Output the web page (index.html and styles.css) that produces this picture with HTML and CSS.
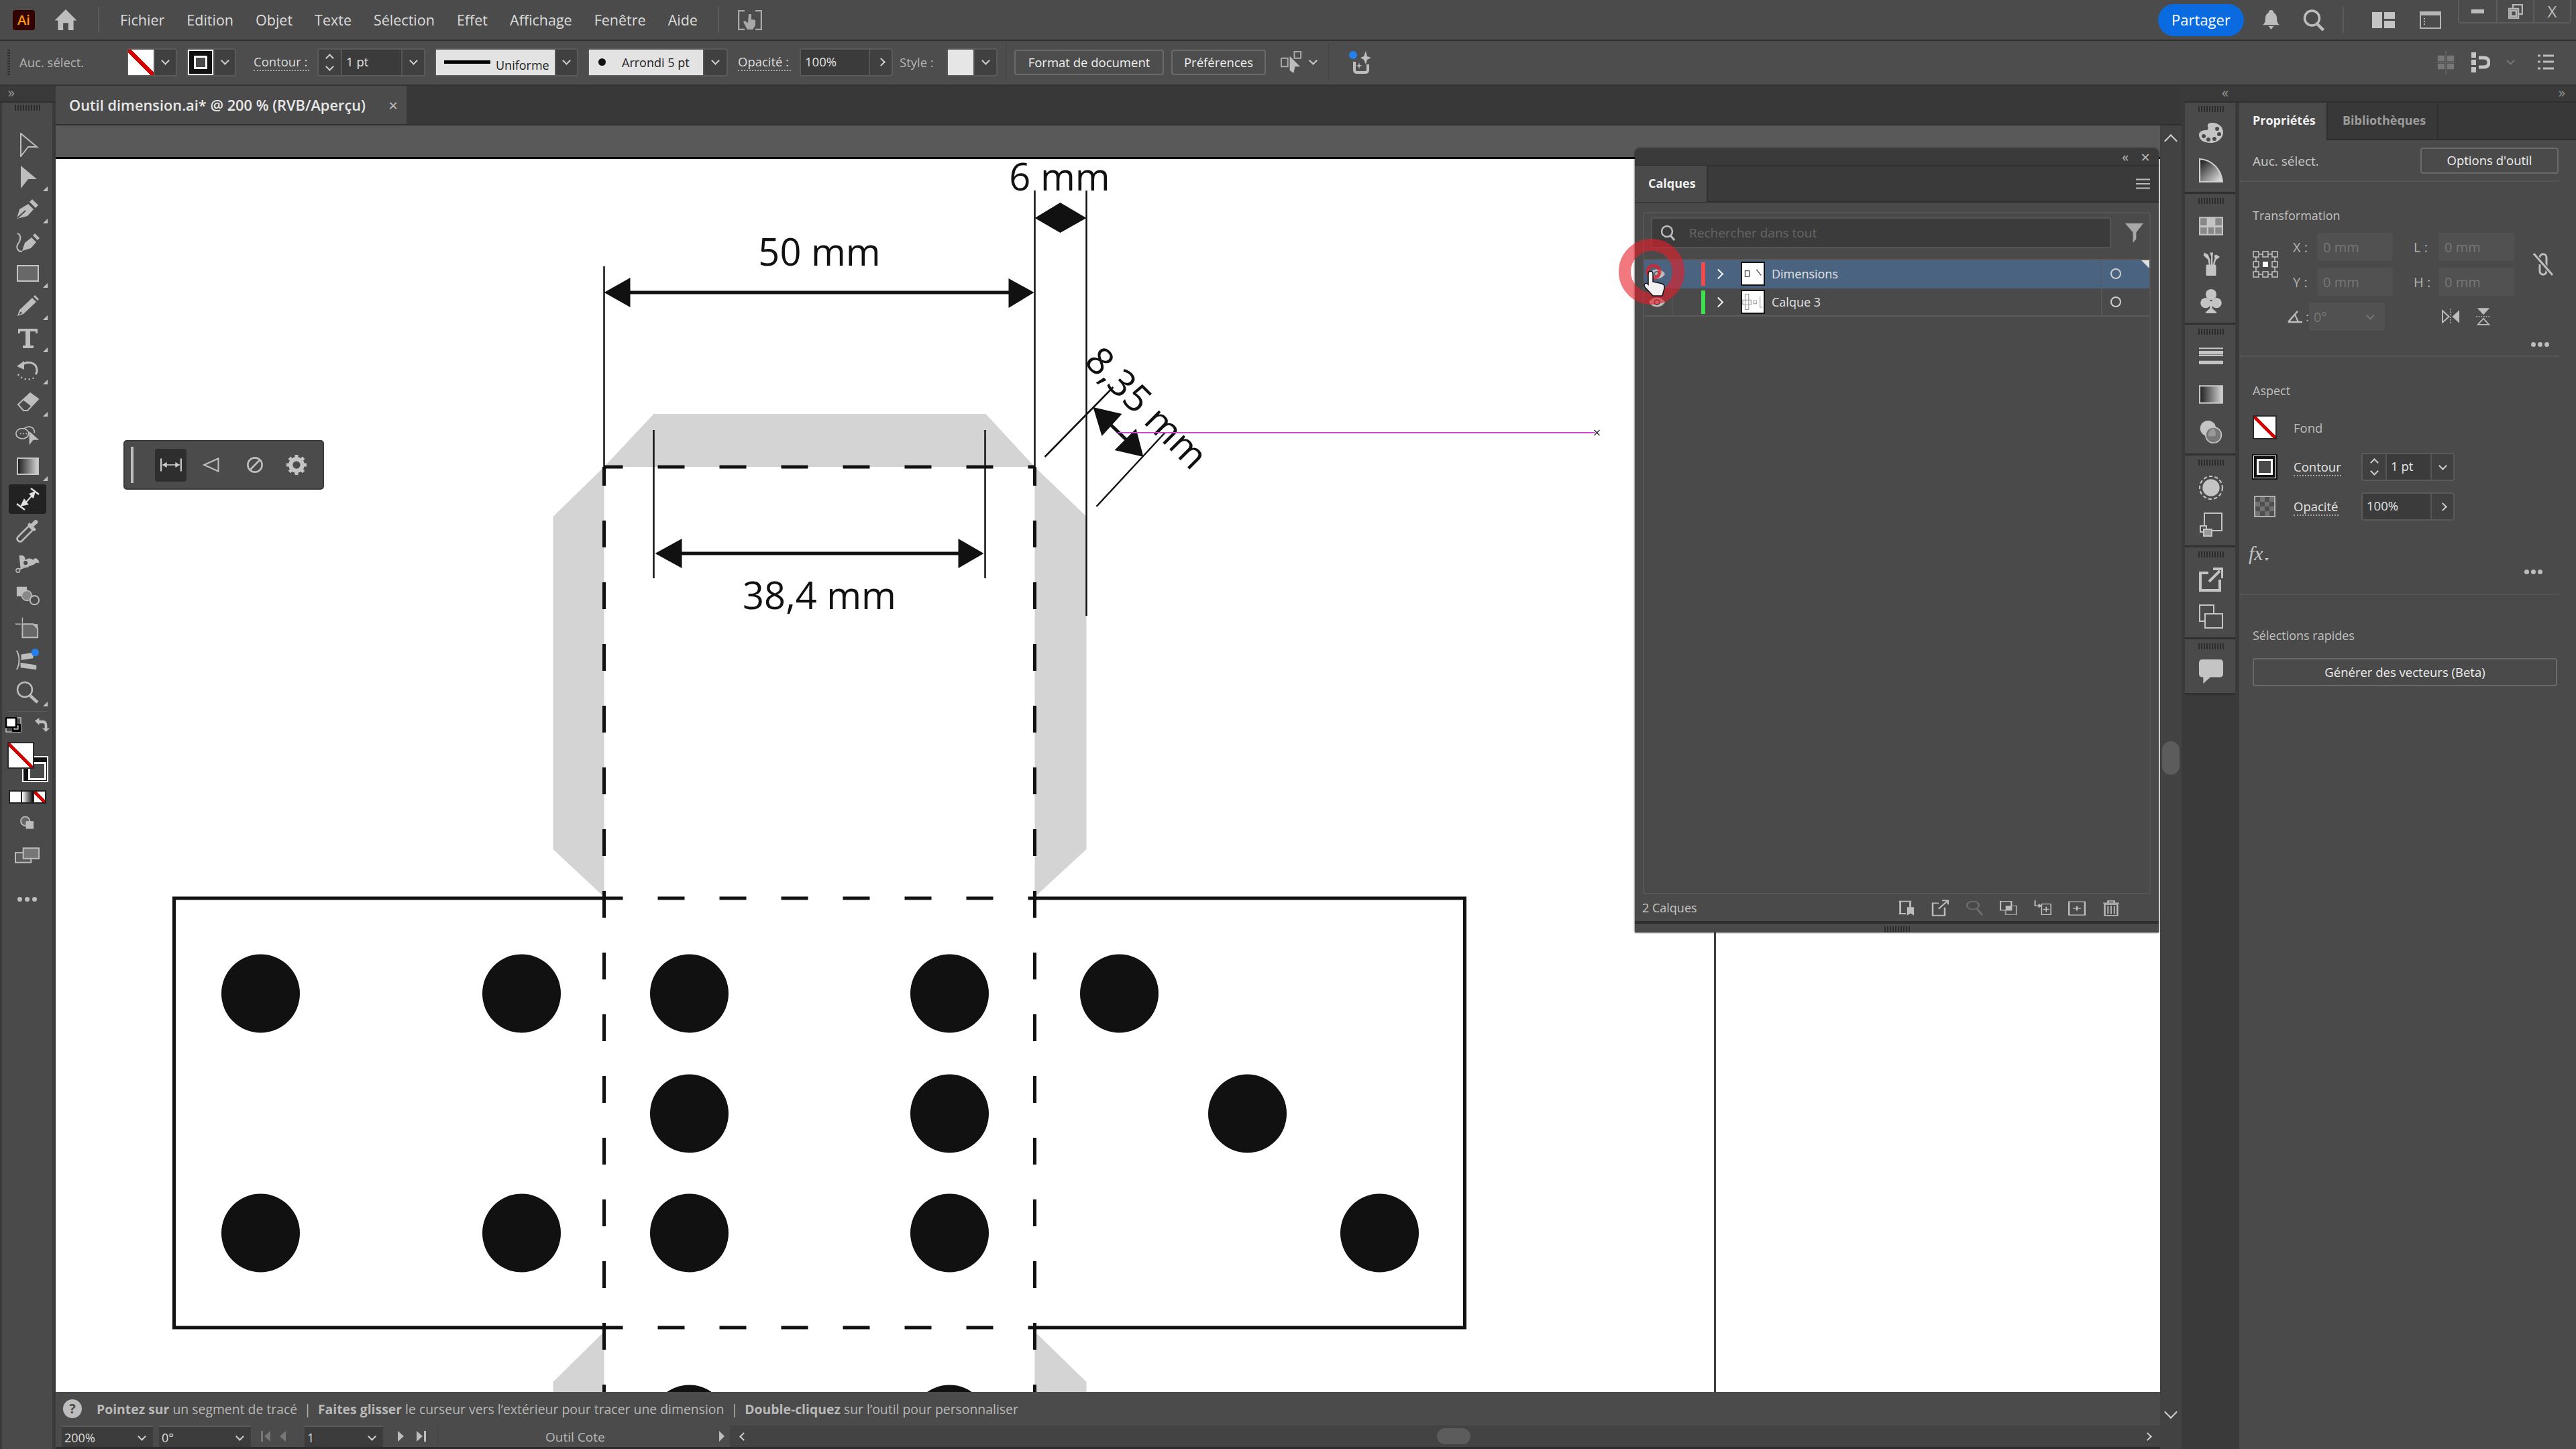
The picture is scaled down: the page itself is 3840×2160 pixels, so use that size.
FILE: index.html
```html
<!DOCTYPE html>
<html lang="fr">
<head>
    <meta charset="utf-8">
    <title>Outil dimension.ai - Illustrator</title>
    <link rel="stylesheet" href="styles.css">
</head>
<body>

    <!-- Menu bar -->
    <header class="menubar">
        <div class="ai-logo">Ai</div>
        <svg class="home-icon" viewBox="0 0 36 32"><path d="M18 0 L35 17 L30 17 L30 32 L22 32 L22 21 L14 21 L14 32 L6 32 L6 17 L1 17 Z" fill="#bdbdbd"/></svg>
        <span class="menu-sep first"></span>
        <nav class="menu-items">
            <span>Fichier</span><span>Edition</span><span>Objet</span><span>Texte</span><span>Sélection</span><span>Effet</span><span>Affichage</span><span>Fenêtre</span><span>Aide</span>
        </nav>
        <span class="menu-sep"></span>
        <svg class="arrange-icon" viewBox="0 0 36 30"><path d="M10 1 H1 V29 H10 M26 1 H35 V29 H26" fill="none" stroke="#a8a8a8" stroke-width="2.5"/><path d="M16 6 H20 V14 L26 15 V23 L22 29 H14 L8 18 L10 16 L15 19 Z" fill="#a8a8a8"/></svg>
        <div class="share-btn">Partager</div>
        <svg class="bell-icon" viewBox="0 0 26 30"><path d="M13 0 C16 0 17 2 17 4 C21 6 22 10 22 14 C22 18 23 21 26 23 H0 C3 21 4 18 4 14 C4 10 5 6 9 4 C9 2 10 0 13 0 Z M9 25 H17 L13 30 Z" fill="#bdbdbd"/></svg>
        <svg class="search-icon" viewBox="0 0 34 32"><circle cx="14" cy="13" r="11" fill="none" stroke="#bdbdbd" stroke-width="3.5"/><path d="M21 21 L31 31" stroke="#bdbdbd" stroke-width="4.5"/></svg>
        <span class="menu-sep right"></span>
        <svg class="layout-icon" viewBox="0 0 34 24"><path d="M0 0 H15 V24 H0 Z M18 0 H34 V10 H18 Z M18 13 H34 V24 H18 Z" fill="#c4c4c4"/></svg>
        <svg class="window-icon" viewBox="0 0 32 26"><rect x="1" y="1" width="30" height="24" fill="none" stroke="#b5b5b5" stroke-width="2"/><rect x="1" y="1" width="30" height="5" fill="#b5b5b5"/><path d="M7 10 V21" stroke="#b5b5b5" stroke-width="2" stroke-dasharray="2 2"/></svg>
        <div class="win-controls">
            <div class="win-btn"><span class="win-min"></span></div>
            <div class="win-btn"><svg class="win-restore" viewBox="0 0 22 22"><path d="M7 6 V1 H21 V15 H16 M1 7 H15 V21 H1 Z M4 10 H12 V18 H4 Z" fill="none" stroke="#b5b5b5" stroke-width="2.5"/></svg></div>
            <div class="win-btn close">X</div>
        </div>
    </header>

    <!-- Control bar -->
    <section class="controlbar">
        <span class="ctl-grip"></span>
        <span class="ctl-text auc">Auc. sélect.</span>
        <div class="combo c-fill"><span class="sw sw-none"></span><span class="chev-box"><i class="chev"></i></span></div>
        <div class="combo c-stroke"><span class="sw sw-stroke"></span><span class="chev-box"><i class="chev"></i></span></div>
        <span class="ctl-text dotted l-contour">Contour :</span>
        <div class="combo c-spin"><span class="spin"><i class="chev up"></i><i class="chev"></i></span><span class="val">1 pt</span><span class="chev-box"><i class="chev"></i></span></div>
        <div class="combo c-line"><span class="light-field lf-line"><b class="stroke-sample"></b><em>Uniforme</em></span><span class="chev-box"><i class="chev"></i></span></div>
        <div class="combo c-brush"><span class="light-field lf-brush"><b class="brush-dot"></b><em>Arrondi 5 pt</em></span><span class="chev-box"><i class="chev"></i></span></div>
        <span class="ctl-text dotted l-opacity">Opacité :</span>
        <div class="combo c-opacity"><span class="val wide">100%</span><span class="chev-box"><i class="chev side"></i></span></div>
        <span class="ctl-text l-style">Style :</span>
        <div class="combo c-style"><span class="sw sw-plain"></span><span class="chev-box"><i class="chev"></i></span></div>
        <span class="ctl-sep s1"></span>
        <div class="ctl-btn b-format">Format de document</div>
        <div class="ctl-btn b-prefs">Préférences</div>
        <svg class="align-icon" viewBox="0 0 38 34"><path d="M22 1 H32 V11 H22 Z M2 11 H12 V24 H2 Z" fill="none" stroke="#aaa" stroke-width="2"/><path d="M15 8 L31 24 L23 24 L21 34 L15 30 Z" fill="#bdbdbd"/></svg>
        <i class="chev free"></i>
        <span class="ctl-sep s2"></span>
        <svg class="recolor-icon" viewBox="0 0 36 36"><path d="M8 17 V29 Q8 33 12 33 H24 Q28 33 28 29 V21" fill="none" stroke="#bdbdbd" stroke-width="4"/><path d="M25 1 L27 9 L33 11 L27 14 L25 21 L22 14 L17 11 L22 9 Z M15 18 L16 22 L20 23 L16 24 L15 28 L14 24 L10 23 L14 22 Z" fill="#bdbdbd"/><circle cx="6" cy="7" r="6" fill="#2680eb"/></svg>
        <div class="ctl-right">
            <svg class="grid-snap" viewBox="0 0 30 38"><path d="M2 8 H13 V17 H2 Z M17 8 H28 V17 H17 Z M2 21 H13 V30 H2 Z M17 21 H28 V30 H17 Z" fill="#777"/><path d="M15 0 V38 M0 19 H30" stroke="#666" stroke-width="1.5"/></svg>
            <svg class="magnet" viewBox="0 0 28 30"><path d="M0 0 H7 V8 H0 Z M0 11 H7 V19 H0 Z M0 22 H7 V30 H0 Z" fill="#c4c4c4"/><path d="M11 8 H18 Q26 8 26 15 Q26 22 18 22 H11" fill="none" stroke="#c4c4c4" stroke-width="5"/></svg>
            <i class="chev free dim"></i>
            <svg class="list-icon" viewBox="0 0 24 24"><path d="M0 2 H4 M8 2 H24 M0 11 H4 M8 11 H24 M0 21 H4 M8 21 H24" stroke="#bdbdbd" stroke-width="3"/></svg>
        </div>
    </section>

    <main class="workspace">

        <!-- Left toolbar -->
        <aside class="left-col">
            <div class="collapse-row"><span>»</span></div>
            <div class="toolbar">
                <div class="tool-grip"><span class="grip"></span></div>
                <div class="tool"><svg viewBox="0 0 36 36"><path d="M8 1 L32 21 L19 21 L8 35 Z" fill="none" stroke="#bdbdbd" stroke-width="2"/></svg></div>
                <div class="tool more"><svg viewBox="0 0 36 36"><path d="M8 1 L32 21 L19 21 L8 35 Z" fill="#bdbdbd"/></svg></div>
                <div class="tool more"><svg viewBox="0 0 36 36"><path d="M2 32 L6 18 L19 10 L27 18 L18 28 Z" fill="#bdbdbd"/><path d="M21 7 L25 3 L34 12 L30 16 Z" fill="#bdbdbd"/><path d="M3 31 L15 20" stroke="#4a4a4a" stroke-width="2"/></svg></div>
                <div class="tool"><svg viewBox="0 0 36 36"><path d="M10 32 L14 20 L24 12 L31 19 L23 28 Z" fill="#bdbdbd"/><path d="M26 9 L29 6 L36 13 L33 16 Z" fill="#bdbdbd"/><path d="M3 6 C9 8 8 16 4 21 C0 28 4 33 10 33" fill="none" stroke="#bdbdbd" stroke-width="2"/></svg></div>
                <div class="tool more"><svg viewBox="0 0 36 36"><rect x="3" y="6" width="31" height="23" fill="#686868" stroke="#c4c4c4" stroke-width="2"/></svg></div>
                <div class="tool more"><svg viewBox="0 0 36 36"><path d="M3 33 L6 24 L25 6 L31 12 L12 30 Z" fill="#bdbdbd"/><path d="M27 4 L29 2 L35 8 L33 10 Z" fill="#bdbdbd"/><path d="M5 31 L8 26 L10 29 Z" fill="#4a4a4a"/></svg></div>
                <div class="tool more"><svg viewBox="0 0 36 36"><path d="M4 4 H33 V11 H30 V8 H22 V29 H27 V33 H11 V29 H15 V8 H7 V11 H4 Z" fill="#bdbdbd"/></svg></div>
                <div class="tool more"><svg viewBox="0 0 36 36"><path d="M9 11 C16 4 32 4 32 19 C32 21 31 23 30 24" fill="none" stroke="#bdbdbd" stroke-width="3"/><path d="M2 12 L13 4 L13 17 Z" fill="#bdbdbd"/><path d="M4 24 C9 32 22 34 29 28" fill="none" stroke="#bdbdbd" stroke-width="2.5" stroke-dasharray="2 4"/></svg></div>
                <div class="tool more"><svg viewBox="0 0 36 36"><path d="M4 21 L22 4 L34 13 L18 30 L12 30 Z" fill="none" stroke="#bdbdbd" stroke-width="2"/><path d="M11 14 L22 4 L34 13 L24 24 Z" fill="#bdbdbd"/></svg></div>
                <div class="tool"><svg viewBox="0 0 42 36"><ellipse cx="12" cy="16" rx="11" ry="9" fill="none" stroke="#bdbdbd" stroke-width="2"/><path d="M14 8 C22 1 34 4 33 15" fill="none" stroke="#bdbdbd" stroke-width="2"/><path d="M8 16 H24" stroke="#bdbdbd" stroke-width="2" stroke-dasharray="2 3"/><path d="M24 12 L41 27 L31 27 L24 36 Z" fill="#bdbdbd"/></svg></div>
                <div class="tool more"><svg viewBox="0 0 36 36"><rect x="3" y="5" width="31" height="24" fill="url(#tool-grad)" stroke="#c4c4c4" stroke-width="2"/></svg></div>
                <div class="tool active"><svg viewBox="0 0 36 36"><path d="M2 25 L14 34 M23 2 L35 11" stroke="#e0e0e0" stroke-width="2.5"/><path d="M7 29 L13 17 L16 21 L23 13 L20 10 L30 6 L27 17 L24 15 L17 23 L20 26 Z" fill="#e0e0e0"/></svg></div>
                <div class="tool"><svg viewBox="0 0 36 36"><path d="M4 32 C2 30 2 28 4 26 L20 10 L26 16 L10 32 C8 34 6 34 4 32 Z" fill="none" stroke="#bdbdbd" stroke-width="2.5"/><path d="M18 8 L28 18 L31 15 L27 11 L33 6 C35 3 31 -1 28 2 L23 7 L21 5 Z" fill="#bdbdbd"/></svg></div>
                <div class="tool"><svg viewBox="0 0 38 36"><path d="M6 6 C14 4 16 9 14 15 C18 9 26 10 28 13 C30 8 36 10 37 17 C33 14 30 20 22 21 C16 22 12 22 8 26" fill="#bdbdbd" stroke="#bdbdbd"/><path d="M4 28 L30 18 M10 8 L20 24" stroke="#bdbdbd" stroke-width="2"/><circle cx="4" cy="29" r="3" fill="#4a4a4a" stroke="#bdbdbd" stroke-width="1.5"/><circle cx="16" cy="17" r="4" fill="#4a4a4a" stroke="#bdbdbd" stroke-width="1.5"/></svg></div>
                <div class="tool"><svg viewBox="0 0 38 36"><rect x="2" y="4" width="16" height="15" fill="#bdbdbd"/><circle cx="18" cy="18" r="8" fill="#888" stroke="#bdbdbd" stroke-width="1.5"/><circle cx="30" cy="25" r="7" fill="#4a4a4a" stroke="#bdbdbd" stroke-width="2"/></svg></div>
                <div class="tool"><svg viewBox="0 0 38 36"><path d="M0 12 H9 M11 2 V10" stroke="#bdbdbd" stroke-width="1.5"/><path d="M11 12 H28 L35 19 V33 H11 Z" fill="#686868" stroke="#bdbdbd" stroke-width="2"/><path d="M27 12 H35 V20 Z" fill="#bdbdbd"/></svg></div>
                <div class="tool"><svg viewBox="0 0 38 36"><path d="M2 3 C7 12 7 24 2 33" fill="none" stroke="#bdbdbd" stroke-width="2"/><path d="M9 9 L28 6 V15 L9 18 Z M8 22 L33 26 V33 L8 30 Z" fill="#bdbdbd"/><circle cx="31" cy="6" r="6" fill="#2680eb"/></svg></div>
                <div class="tool more"><svg viewBox="0 0 36 36"><circle cx="14" cy="14" r="11" fill="none" stroke="#bdbdbd" stroke-width="2.5"/><path d="M22 23 L33 33" stroke="#bdbdbd" stroke-width="4.5"/></svg></div>
                <span class="tool-sep"></span>
                <div class="default-row">
                    <svg class="default-icon" viewBox="0 0 24 24"><rect x="1" y="1" width="22" height="21" fill="#4a4a4a" stroke="#bdbdbd" stroke-width="1.5"/><rect x="10" y="10" width="13" height="12" fill="#000"/><rect x="13" y="13" width="6" height="5" fill="#4a4a4a" stroke="#fff"/><rect x="1" y="1" width="15" height="14" fill="#fff" stroke="#000" stroke-width="2.5"/></svg>
                    <svg class="swap-icon" viewBox="0 0 24 24"><path d="M0 5 L7 0 V4 H13 C18 4 20 8 20 12 V17 H24 L18 23 L12 17 H16 V12 C16 10 15 9 13 9 H7 V12 Z" fill="#bdbdbd"/></svg>
                </div>
                <div class="fill-stroke">
                    <span class="big-stroke"></span>
                    <span class="big-fill"></span>
                </div>
                <div class="modes">
                    <span class="mode-solid"></span><span class="mode-grad"></span><span class="mode-none"></span>
                </div>
                <div class="tool-small draw-mode"><svg viewBox="0 0 22 20"><circle cx="8" cy="8" r="7" fill="#666" stroke="#bdbdbd" stroke-width="2"/><path d="M9 8 H21 V20 H9 Z" fill="#bdbdbd"/></svg></div>
                <div class="tool-small screen-mode"><svg viewBox="0 0 38 24"><rect x="1" y="8" width="24" height="15" fill="#5c5c5c" stroke="#bdbdbd" stroke-width="2"/><rect x="13" y="1" width="24" height="16" fill="#777" stroke="#bdbdbd" stroke-width="2"/></svg></div>
                <div class="tool-dots"><i></i><i></i><i></i></div>
            </div>
        </aside>

        <!-- Document -->
        <section class="doc-col">
            <div class="doc-tabs">
                <div class="doc-tab"><span>Outil dimension.ai* @ 200 % (RVB/Aperçu)</span><em>×</em></div>
            </div>
            <div class="doc-body">
                <div class="canvas-col">
                    <div class="pasteboard"></div>
                    <div class="artboard">
                        <svg class="art" viewBox="84 237 3136 1838">
                            <!-- gray tabs -->
                            <g fill="#d4d4d4">
                                <path d="M975 617 H1470 L1543 696 H901 Z"/>
                                <path d="M901 696 L825 770 V1266 L901 1337 Z"/>
                                <path d="M1543 696 L1620 770 V1266 L1543 1337 Z"/>
                                <path d="M901 1985 L825 2060 V2075 H901 Z"/>
                                <path d="M1543 1985 L1620 2060 V2075 H1543 Z"/>
                            </g>
                            <!-- outer solid outline -->
                            <path d="M901 1339 H260 V1979 H901 M1543 1339 H2184 V1979 H1543" fill="none" stroke="#111" stroke-width="5"/>
                            <!-- fold lines -->
                            <g fill="none" stroke="#111" stroke-width="5" stroke-dasharray="40 52" stroke-dashoffset="12">
                                <path d="M901 696 H1543"/>
                                <path d="M901 1339 H1543"/>
                                <path d="M901 1979 H1543"/>
                                <path d="M901 696 V2075"/>
                                <path d="M1543 696 V2075"/>
                            </g>
                            <!-- holes -->
                            <g fill="#111">
                                <circle cx="389" cy="1481" r="58.5"/><circle cx="778" cy="1481" r="58.5"/><circle cx="1028" cy="1481" r="58.5"/><circle cx="1416" cy="1481" r="58.5"/><circle cx="1669" cy="1481" r="58.5"/>
                                <circle cx="1028" cy="1660" r="58.5"/><circle cx="1416" cy="1660" r="58.5"/><circle cx="1860" cy="1660" r="58.5"/>
                                <circle cx="389" cy="1838" r="58.5"/><circle cx="778" cy="1838" r="58.5"/><circle cx="1028" cy="1838" r="58.5"/><circle cx="1416" cy="1838" r="58.5"/><circle cx="2057" cy="1838" r="58.5"/>
                                <circle cx="1028" cy="2123" r="58.5"/><circle cx="1416" cy="2123" r="58.5"/>
                            </g>
                            <!-- dimension 50 mm -->
                            <path d="M901 397 V696 M1543 284 V696 M1620 284 V918" stroke="#111" stroke-width="2.5"/>
                            <path d="M935 436 H1510" stroke="#111" stroke-width="5"/>
                            <path d="M901 436 L940 414 V458 Z M1542 436 L1504 415 V459 Z" fill="#111"/>
                            <text class="dim-text" x="1222" y="396">50 mm</text>
                            <!-- dimension 6 mm -->
                            <path d="M1543 325 L1581 302 L1620 325 L1581 347 Z" fill="#111"/>
                            <text class="dim-text" x="1580" y="284">6 mm</text>
                            <!-- dimension 38,4 mm -->
                            <path d="M975 641 V862 M1469 641 V862" stroke="#111" stroke-width="2.5"/>
                            <path d="M1010 825 H1435" stroke="#111" stroke-width="5"/>
                            <path d="M977 825 L1017 803 V847 Z M1467 825 L1429 803 V847 Z" fill="#111"/>
                            <text class="dim-text" x="1222" y="908">38,4 mm</text>
                            <!-- dimension 8,35 mm -->
                            <path d="M1558 681 L1660 577 M1635 755 L1737 645" stroke="#111" stroke-width="2.5"/>
                            <path d="M1655 632 L1680 656" stroke="#111" stroke-width="5"/>
                            <path d="M1630 607 L1673 617 L1643 650 Z M1705 681 L1662 671 L1694 639 Z" fill="#111"/>
                            <text class="dim-text" x="1696" y="622" transform="rotate(45 1696 622)">8,35 mm</text>
                            <!-- smart guide -->
                            <path d="M1667 645 H2378" stroke="#c94ad0" stroke-width="2"/>
                            <path d="M2377 641 L2385 649 M2385 641 L2377 649" stroke="#333" stroke-width="1.5"/>
                            <path d="M2557 237 V2075" stroke="#111" stroke-width="2.5"/>
                        </svg>
                    </div>
                    <div class="hintbar">
                        <span class="hint-q">?</span>
                        <p><b>Pointez sur</b> un segment de tracé <u>|</u> <b>Faites glisser</b> le curseur vers l’extérieur pour tracer une dimension <u>|</u> <b>Double-cliquez</b> sur l’outil pour personnaliser</p>
                    </div>
                    <div class="statusbar">
                        <div class="st-box st-zoom"><span>200%</span><i class="chev"></i></div>
                        <div class="st-box st-rot"><span>0°</span><i class="chev"></i></div>
                        <svg class="st-nav" viewBox="0 0 50 20"><path d="M1 2 H4 V18 H1 Z M15 2 V18 L6 10 Z M38 2 V18 L29 10 Z" fill="#777"/></svg>
                        <div class="st-box st-page"><span>1</span><i class="chev"></i></div>
                        <svg class="st-nav next" viewBox="0 0 50 20"><path d="M2 2 V18 L11 10 Z M30 2 V18 L39 10 Z M41 2 H44 V18 H41 Z" fill="#bdbdbd"/></svg>
                        <span class="st-sep"></span>
                        <span class="st-label">Outil Cote</span>
                        <svg class="st-arrow" viewBox="0 0 10 20"><path d="M1 2 V18 L9 10 Z" fill="#bdbdbd"/></svg>
                        <div class="h-scroll">
                            <i class="chev side back"></i>
                            <span class="h-thumb"></span>
                            <i class="chev side"></i>
                        </div>
                    </div>
                </div>
                <div class="v-scroll">
                    <i class="chev up"></i>
                    <span class="v-thumb"></span>
                    <i class="chev"></i>
                </div>
            </div>
        </section>

        <!-- Right dock and panel -->
        <aside class="right-col">
            <div class="right-head"><span>«</span><span>»</span></div>
            <div class="right-body">
                <div class="dock">
                    <div class="dock-group first">
                        <span class="grip"></span>
                        <div class="dock-slot"><svg viewBox="0 0 36 32"><path d="M20 1 C30 1 36 8 36 15 C36 24 28 31 17 31 C6 31 0 26 0 19 C0 14 5 12 10 12 C14 12 14 9 13 6 C12 3 15 1 20 1 Z" fill="#c4c4c4"/><circle cx="27" cy="10" r="3" fill="#4a4a4a"/><circle cx="30" cy="18" r="3" fill="#4a4a4a"/><circle cx="23" cy="25" r="3" fill="#4a4a4a"/><circle cx="14" cy="26" r="3" fill="#4a4a4a"/><circle cx="7" cy="21" r="3" fill="#4a4a4a"/></svg></div>
                        <div class="dock-slot"><svg viewBox="0 0 34 34"><path d="M1 1 C18 2 31 15 33 33 H1 Z" fill="url(#wheel-grad)" stroke="#d0d0d0" stroke-width="2"/></svg></div>
                    </div>
                    <div class="dock-group">
                        <span class="grip"></span>
                        <div class="dock-slot"><svg viewBox="0 0 34 26"><rect width="34" height="26" fill="#c4c4c4"/><path d="M2 2 H11 V12 H2 Z M23 2 H32 V12 H23 Z M2 15 H11 V24 H2 Z M13 15 H21 V24 H13 Z M23 15 H32 V24 H23 Z" fill="#888"/></svg></div>
                        <div class="dock-slot"><svg viewBox="0 0 34 48"><rect x="7" y="26" width="20" height="22" rx="2" fill="#c4c4c4"/><path d="M13 28 L11 16 L2 8 L3 2 L11 6 L15 16 L16 28 M17 28 V10 L15 2 H21 L20 10 V28 M20 28 L24 14 C26 12 20 8 27 6 L34 10 C32 14 30 14 27 16 L23 28" fill="#c4c4c4"/></svg></div>
                        <div class="dock-slot"><svg viewBox="0 0 34 40"><circle cx="17" cy="9" r="9" fill="#c4c4c4"/><circle cx="8" cy="23" r="8.5" fill="#c4c4c4"/><circle cx="26" cy="23" r="8.5" fill="#c4c4c4"/><path d="M15 20 H19 V32 L26 38 V40 H8 V38 L15 32 Z" fill="#c4c4c4"/></svg></div>
                    </div>
                    <div class="dock-group">
                        <span class="grip"></span>
                        <div class="dock-slot"><svg viewBox="0 0 34 26"><path d="M0 1 H34 M0 11 H34" stroke="#c4c4c4" stroke-width="2"/><path d="M0 7 H34 M0 21 H34" stroke="#c4c4c4" stroke-width="5"/></svg></div>
                        <div class="dock-slot"><svg viewBox="0 0 34 26"><rect x="1" y="1" width="32" height="24" fill="url(#tool-grad)" stroke="#c4c4c4" stroke-width="2"/></svg></div>
                        <div class="dock-slot"><svg viewBox="0 0 36 40"><circle cx="13" cy="14" r="13" fill="#c4c4c4"/><circle cx="22" cy="25" r="13" fill="#777" stroke="#c4c4c4" stroke-width="2"/><path d="M13 27 A13 13 0 0 1 22 14 A13 13 0 0 1 25 27 Z" fill="#999"/></svg></div>
                    </div>
                    <div class="dock-group">
                        <span class="grip"></span>
                        <div class="dock-slot tight"><svg viewBox="0 0 34 34"><circle cx="17" cy="17" r="12" fill="#c4c4c4"/><circle cx="17" cy="17" r="16" fill="none" stroke="#c4c4c4" stroke-width="2" stroke-dasharray="5 3"/></svg></div>
                        <div class="dock-slot tight"><svg viewBox="0 0 34 36"><rect x="7" y="1" width="26" height="26" fill="none" stroke="#c4c4c4" stroke-width="2"/><rect x="1" y="20" width="9" height="9" fill="#4a4a4a" stroke="#c4c4c4" stroke-width="2"/><rect x="6" y="25" width="12" height="10" fill="#999" stroke="#c4c4c4" stroke-width="2"/></svg></div>
                    </div>
                    <div class="dock-group">
                        <span class="grip"></span>
                        <div class="dock-slot tight"><svg viewBox="0 0 36 36"><path d="M14 8 H2 V34 H31 V18" fill="none" stroke="#c4c4c4" stroke-width="4"/><path d="M15 21 L31 5 M21 2 H35 V16" fill="none" stroke="#c4c4c4" stroke-width="4"/></svg></div>
                        <div class="dock-slot tight"><svg viewBox="0 0 36 36"><rect x="1" y="1" width="21" height="24" fill="none" stroke="#c4c4c4" stroke-width="2"/><rect x="9" y="14" width="26" height="21" fill="#4a4a4a" stroke="#c4c4c4" stroke-width="2"/></svg></div>
                    </div>
                    <div class="dock-group">
                        <span class="grip"></span>
                        <div class="dock-slot"><svg viewBox="0 0 34 34"><path d="M5 0 H29 Q34 0 34 5 V20 Q34 25 29 25 H16 L6 34 V25 H5 Q0 25 0 20 V5 Q0 0 5 0 Z" fill="#c4c4c4"/></svg></div>
                    </div>
                </div>

                <div class="props">
                    <div class="prop-tabs">
                        <div class="prop-tab on">Propriétés</div>
                        <div class="prop-tab">Bibliothèques</div>
                    </div>
                    <div class="prop-head">
                        <span>Auc. sélect.</span>
                        <div class="panel-btn">Options d'outil</div>
                    </div>

                    <div class="prop-section transform">
                        <h4>Transformation</h4>
                        <div class="tf-grid">
                            <svg class="ref-point" viewBox="0 0 38 40"><g fill="none" stroke="#c4c4c4" stroke-width="1.5"><path d="M1 1 H9 V9 H1 Z M15 1 H23 V9 H15 Z M29 1 H37 V9 H29 Z M1 16 H9 V24 H1 Z M29 16 H37 V24 H29 Z M1 31 H9 V39 H1 Z M15 31 H23 V39 H15 Z M29 31 H37 V39 H29 Z M9 5 H15 M23 5 H29 M9 35 H15 M23 35 H29 M5 9 V16 M33 9 V16 M5 24 V31 M33 24 V31"/></g><rect x="15" y="16" width="8" height="8" fill="#fff"/></svg>
                            <label>X :</label><span class="tf-field">0 mm</span>
                            <label class="second">L :</label><span class="tf-field">0 mm</span>
                            <svg class="link-off" viewBox="0 0 30 36"><path d="M10 8 C10 1 20 1 20 8 V28 C20 35 10 35 10 28 V18" fill="none" stroke="#bdbdbd" stroke-width="3"/><path d="M1 2 L29 34" stroke="#4a4a4a" stroke-width="6"/><path d="M1 2 L29 34" stroke="#bdbdbd" stroke-width="3"/></svg>
                            <label>Y :</label><span class="tf-field">0 mm</span>
                            <label class="second">H :</label><span class="tf-field">0 mm</span>
                        </div>
                        <div class="tf-angle">
                            <svg class="angle-icon" viewBox="0 0 24 20"><path d="M2 18 L16 2 M2 18 H23" stroke="#bdbdbd" stroke-width="2.5" fill="none"/><path d="M12 7 L17 18" stroke="#bdbdbd" stroke-width="2" fill="none"/></svg>
                            <span class="colon">:</span>
                            <span class="tf-field angle">0°<i class="chev dim"></i></span>
                            <svg class="flip-h" viewBox="0 0 28 24"><path d="M1 3 L11 12 L1 21 Z" fill="none" stroke="#bdbdbd" stroke-width="2"/><path d="M27 2 V22 L16 12 Z" fill="#bdbdbd"/><path d="M13.5 0 V24" stroke="#bdbdbd" stroke-width="1.5" stroke-dasharray="2 2"/></svg>
                            <svg class="flip-v" viewBox="0 0 24 28"><path d="M2 0 H22 L12 11 Z" fill="#bdbdbd"/><path d="M3 27 L12 17 L21 27 Z" fill="none" stroke="#bdbdbd" stroke-width="2"/><path d="M0 14 H24" stroke="#bdbdbd" stroke-width="1.5" stroke-dasharray="2 2"/></svg>
                        </div>
                        <div class="more-dots"><i></i><i></i><i></i></div>
                    </div>

                    <div class="prop-section aspect">
                        <h4>Aspect</h4>
                        <div class="asp-row"><span class="sw sw-none s36"></span><span class="asp-label">Fond</span></div>
                        <div class="asp-row">
                            <span class="sw sw-stroke s36"></span><span class="asp-label dotted">Contour</span>
                            <div class="combo c-spin2"><span class="spin"><i class="chev up"></i><i class="chev"></i></span><span class="val">1 pt</span><span class="chev-box"><i class="chev"></i></span></div>
                        </div>
                        <div class="asp-row">
                            <span class="checker"></span><span class="asp-label dotted">Opacité</span>
                            <div class="combo c-opa2"><span class="val wide">100%</span><span class="chev-box"><i class="chev side"></i></span></div>
                        </div>
                        <div class="fx-row"><em>fx</em><small></small></div>
                        <div class="more-dots"><i></i><i></i><i></i></div>
                    </div>

                    <div class="prop-section quick">
                        <h4>Sélections rapides</h4>
                        <div class="panel-btn full">Générer des vecteurs (Beta)</div>
                    </div>
                </div>
            </div>
        </aside>
    </main>

    <!-- Floating tool widget -->
    <div class="dim-widget">
        <span class="w-grip"></span>
        <span class="w-item on"><svg viewBox="0 0 32 24"><path d="M2 3 V21 M30 3 V21" stroke="#cfcfcf" stroke-width="2"/><path d="M4 12 H28" stroke="#cfcfcf" stroke-width="1.5"/><path d="M4 12 L10 8 V16 Z M28 12 L22 8 V16 Z" fill="#cfcfcf"/></svg></span>
        <span class="w-item"><svg viewBox="0 0 32 24"><path d="M4 12 L24 3 V21 Z" fill="none" stroke="#bdbdbd" stroke-width="2"/></svg></span>
        <span class="w-item"><svg viewBox="0 0 32 24"><circle cx="16" cy="12" r="10" fill="none" stroke="#bdbdbd" stroke-width="2.5"/><path d="M9 19 L23 5" stroke="#bdbdbd" stroke-width="2.5"/></svg></span>
        <span class="w-item"><svg viewBox="0 0 24 24"><circle cx="12" cy="12" r="7" fill="none" stroke="#c4c4c4" stroke-width="5"/><path d="M12 0 V24 M0 12 H24 M3.5 3.5 L20.5 20.5 M20.5 3.5 L3.5 20.5" stroke="#c4c4c4" stroke-width="4" stroke-dasharray="4 16"/></svg></span>
    </div>

    <!-- Layers panel -->
    <section class="layers-panel">
        <div class="lp-title"><span>«</span><em>×</em></div>
        <div class="lp-tabs">
            <div class="lp-tab">Calques</div>
            <svg class="lp-menu" viewBox="0 0 21 16"><path d="M0 1.5 H21 M0 8 H21 M0 14.5 H21" stroke="#bdbdbd" stroke-width="2"/></svg>
        </div>
        <div class="lp-frame">
            <div class="lp-search-row">
                <div class="lp-search">
                    <svg viewBox="0 0 22 24"><circle cx="10" cy="10" r="8" fill="none" stroke="#bdbdbd" stroke-width="2.5"/><path d="M15 16 L21 23" stroke="#bdbdbd" stroke-width="3"/></svg>
                    <span>Rechercher dans tout</span>
                </div>
                <svg class="lp-filter" viewBox="0 0 28 30"><path d="M0 0 H28 L17 14 V24 L12 30 V14 Z" fill="#a8a8a8"/></svg>
            </div>
            <div class="layer-row selected">
                <span class="l-eye"><svg viewBox="0 0 26 16"><path d="M0 8 C6 -2 20 -2 26 8 C20 18 6 18 0 8 Z" fill="#bdbdbd"/><circle cx="13" cy="8" r="4" fill="none" stroke="#4a6380" stroke-width="2"/></svg></span>
                <span class="l-color red"></span>
                <i class="chev side l-chev"></i>
                <span class="l-thumb"><svg viewBox="0 0 36 34"><path d="M5 12 H12 V22 H5 Z M24 10 L32 20" fill="none" stroke="#555" stroke-width="1.5"/></svg></span>
                <span class="l-name">Dimensions</span>
                <span class="l-target"></span>
                <span class="l-corner"></span>
            </div>
            <div class="layer-row">
                <span class="l-eye"><svg viewBox="0 0 26 16"><path d="M0 8 C6 -2 20 -2 26 8 C20 18 6 18 0 8 Z" fill="#bdbdbd"/><circle cx="13" cy="8" r="4" fill="none" stroke="#4a4a4a" stroke-width="2"/></svg></span>
                <span class="l-color green"></span>
                <i class="chev side l-chev"></i>
                <span class="l-thumb"><svg viewBox="0 0 36 34"><path d="M5 4 H11 V30 H5 Z M1 14 H15 V22 H1 Z M30 8 V26 H34 M19 15 H24 V20 H19 Z" fill="none" stroke="#999" stroke-width="1.2"/></svg></span>
                <span class="l-name">Calque 3</span>
                <span class="l-target"></span>
            </div>
        </div>
        <div class="lp-foot">
            <span>2 Calques</span>
            <div class="lp-foot-icons">
                <svg viewBox="0 0 28 38" preserveAspectRatio="none"><path d="M3 4 H23 M5 4 V32 M3 32 H14 M21 6 V18" stroke="#bdbdbd" stroke-width="3" fill="none"/><path d="M16 17 H27 V36 L21.5 31 L16 36 Z" fill="#bdbdbd"/></svg>
                <svg viewBox="0 0 26 38" preserveAspectRatio="none"><path d="M11 8 H2 V36 H20 V18" fill="none" stroke="#bdbdbd" stroke-width="2.5"/><path d="M11 21 L24 3 M16 2 H25 V11" fill="none" stroke="#bdbdbd" stroke-width="2.5"/></svg>
                <svg viewBox="0 0 26 38" preserveAspectRatio="none"><circle cx="11" cy="13" r="9" fill="none" stroke="#6e6e6e" stroke-width="2.5"/><path d="M17 21 L25 35" stroke="#6e6e6e" stroke-width="3.5"/></svg>
                <svg viewBox="0 0 24 38" preserveAspectRatio="none"><rect x="8" y="14" width="15" height="20" fill="none" stroke="#999" stroke-width="2"/><rect x="1" y="4" width="15" height="20" fill="#4a4a4a" stroke="#bdbdbd" stroke-width="2"/><rect x="8" y="14" width="8" height="10" fill="#bdbdbd"/></svg>
                <svg viewBox="0 0 32 38" preserveAspectRatio="none"><path d="M2 2 V14 H10" fill="none" stroke="#bdbdbd" stroke-width="2.5"/><path d="M8 9 L15 14 L8 19 Z" fill="#bdbdbd"/><rect x="14" y="10" width="17" height="24" fill="none" stroke="#bdbdbd" stroke-width="2"/><path d="M22.5 16 V28 M17 22 H28" stroke="#bdbdbd" stroke-width="2"/></svg>
                <svg viewBox="0 0 22 38" preserveAspectRatio="none"><rect x="1" y="5" width="20" height="30" fill="none" stroke="#bdbdbd" stroke-width="2"/><path d="M11 15 V25 M6 20 H16" stroke="#bdbdbd" stroke-width="2"/></svg>
                <svg viewBox="0 0 22 38" preserveAspectRatio="none"><path d="M1 8 H21 M7 8 V3 H15 V8" fill="none" stroke="#bdbdbd" stroke-width="2"/><rect x="3" y="11" width="16" height="25" fill="none" stroke="#bdbdbd" stroke-width="2"/><path d="M7 14 V33 M11 14 V33 M15 14 V33" stroke="#bdbdbd" stroke-width="1.5"/></svg>
            </div>
        </div>
        <div class="lp-resize"><span class="grip"></span></div>
    </section>

    <!-- Click highlight and cursor -->
    <svg class="click-fx" viewBox="0 0 120 120">
        <circle cx="60" cy="60" r="40" fill="none" stroke="#e61e28" stroke-opacity="0.6" stroke-width="18"/>
        <circle cx="63" cy="60" r="9" fill="none" stroke="#e61e28" stroke-opacity="0.75" stroke-width="5"/>
        <path d="M55 63 C55 58 62 58 62 63 V75 L72 77 C78 78 80 80 79 85 L76 96 H62 L50 83 C47 79 52 75 55 79 Z" fill="#f2f2f2" stroke="#111" stroke-width="1.5"/>
    </svg>

    <!-- shared gradients -->
    <svg class="defs-only" width="0" height="0">
        <defs>
            <linearGradient id="tool-grad"><stop offset="0" stop-color="#1c1c1c"/><stop offset="1" stop-color="#d6d6d6"/></linearGradient>
            <linearGradient id="wheel-grad" x1="0" y1="0" x2="1" y2="1"><stop offset="0" stop-color="#111"/><stop offset="1" stop-color="#eee"/></linearGradient>
        </defs>
    </svg>

</body>
</html>
```

FILE: styles.css
```css
/* General */
* {
    box-sizing: border-box;
}

html, body {
    margin: 0;
    padding: 0;
}

body {
    position: relative;
    width: 3840px;
    height: 2160px;
    overflow: hidden;
    background-color: #3a3a3a;
    color: #c8c8c8;
    font-family: 'Open Sans', sans-serif;
    font-size: 19px;
    display: flex;
    flex-direction: column;
}

svg {
    display: block;
    flex: none;
}

em, i {
    font-style: normal;
}

.defs-only {
    position: absolute;
}

.grip {
    display: block;
    width: 38px;
    height: 9px;
    background: repeating-linear-gradient(90deg, #2c2c2c 0 2px, transparent 2px 4px);
}

.chev {
    display: inline-block;
    flex: none;
    width: 9px;
    height: 9px;
    border-right: 2px solid #d0d0d0;
    border-bottom: 2px solid #d0d0d0;
    transform: translateY(-2px) rotate(45deg);
}

.chev.up {
    transform: translateY(2px) rotate(225deg);
}

.chev.side {
    transform: rotate(-45deg);
}

.chev.side.back {
    transform: rotate(135deg);
}

.chev.dim {
    border-color: #777;
}

/* Menu bar */
.menubar {
    flex: none;
    height: 61px;
    display: flex;
    align-items: center;
    background-color: #4b4b4b;
    border-bottom: 2px solid #2f2f2f;
}

.ai-logo {
    width: 33px;
    height: 30px;
    margin-left: 19px;
    border-radius: 4px;
    background-color: #330000;
    color: #ff9a00;
    font-size: 20px;
    font-weight: 600;
    line-height: 30px;
    text-align: center;
}

.home-icon {
    width: 36px;
    height: 31px;
    margin-left: 28px;
}

.menu-sep {
    width: 2px;
    height: 39px;
    background-color: #5a5a5a;
    margin-left: 30px;
}

.menu-items {
    display: flex;
    margin-left: 31px;
    color: #dcdcdc;
    font-size: 21.5px;
}

.menu-items span {
    margin-right: 33px;
}

.menu-items + .menu-sep {
    margin-left: -3px;
}

.arrange-icon {
    width: 36px;
    height: 30px;
    margin-left: 28px;
}

.share-btn {
    margin-left: auto;
    width: 128px;
    height: 48px;
    border-radius: 24px;
    background-color: #0a6ae0;
    color: #fff;
    font-size: 22px;
    line-height: 47px;
    text-align: center;
}

.bell-icon {
    width: 25px;
    height: 29px;
    margin-left: 28px;
}

.search-icon {
    width: 35px;
    height: 32px;
    margin-left: 34px;
}

.menu-sep.right {
    margin-left: 25px;
}

.layout-icon {
    width: 34px;
    height: 24px;
    margin-left: 42px;
}

.window-icon {
    width: 32px;
    height: 26px;
    margin-left: 37px;
}

.win-controls {
    align-self: flex-start;
    display: flex;
    height: 35px;
    margin-left: 25px;
    margin-right: 7px;
    border: 2px solid #5c5c5c;
    border-top: none;
    border-radius: 0 0 5px 5px;
}

.win-btn {
    width: 55px;
    display: flex;
    align-items: center;
    justify-content: center;
    border-left: 2px solid #5c5c5c;
}

.win-btn:first-child {
    border-left: none;
}

.win-min {
    width: 19px;
    height: 6px;
    background-color: #bdbdbd;
}

.win-restore {
    width: 22px;
    height: 22px;
}

.win-btn.close {
    color: #bdbdbd;
    font-size: 24px;
}

/* Control bar */
.controlbar {
    flex: none;
    height: 67px;
    display: flex;
    align-items: center;
    padding-bottom: 2px;
    background-color: #4d4d4d;
    border-bottom: 2px solid #333;
}

.ctl-grip {
    width: 4px;
    height: 38px;
    margin-left: 11px;
    background: repeating-linear-gradient(0deg, #2f2f2f 0 2px, transparent 2px 4px);
}

.ctl-text {
    flex: none;
    color: #b4b4b4;
}

.auc {
    margin-left: 14px;
    width: 160px;
    font-size: 18.5px;
}

.dotted {
    color: #dcdcdc;
    border-bottom: 2px dotted #aaa;
    line-height: 25px;
}

.combo {
    flex: none;
    height: 42px;
    display: flex;
    align-items: stretch;
    border: 2px solid #5a5a5a;
    border-radius: 4px;
    background-color: #404040;
    color: #e4e4e4;
}

.chev-box {
    flex: 1;
    display: flex;
    align-items: center;
    justify-content: center;
    border-left: 2px solid #555;
}

.sw {
    display: block;
    flex: none;
    width: 38px;
    position: relative;
}

.sw-none {
    background: linear-gradient(to top right, #fff 44%, #d40000 44%, #d40000 56%, #fff 56%);
}

.sw-stroke {
    background-color: #111;
    border: 2px solid #fff;
}

.sw-stroke::after {
    content: "";
    position: absolute;
    left: 50%;
    top: 50%;
    width: 14px;
    height: 14px;
    transform: translate(-50%, -50%);
    background-color: #4a4a4a;
    border: 3px solid #fff;
}

.sw-plain {
    background-color: #e6e6e6;
}

.c-fill {
    width: 75px;
}

.c-stroke {
    width: 74px;
    margin-left: 14px;
}

.l-contour {
    margin-left: 26px;
    width: 83px;
    margin-right: 12px;
    font-size: 18.5px;
}

.c-spin {
    width: 161px;
}

.spin {
    flex: none;
    width: 35px;
    display: flex;
    flex-direction: column;
    align-items: center;
    justify-content: center;
    gap: 8px;
    border-right: 2px solid #555;
}

.val {
    flex: none;
    width: 88px;
    padding-left: 6px;
    line-height: 36px;
    background-color: #3b3b3b;
    font-size: 18.5px;
}

.val.wide {
    width: 101px;
}

.light-field {
    flex: none;
    display: flex;
    align-items: center;
    background-color: #e3e3e3;
    color: #222;
    font-size: 18px;
}

.lf-line {
    width: 177px;
}

.stroke-sample {
    width: 69px;
    height: 5px;
    margin-left: 12px;
    margin-right: 8px;
    background-color: #000;
}

.lf-line em {
    transform: translateY(4px);
}

.c-line {
    width: 214px;
    margin-left: 14px;
}

.lf-brush {
    width: 170px;
}

.brush-dot {
    width: 11px;
    height: 11px;
    margin-left: 14px;
    margin-right: 24px;
    border-radius: 50%;
    background-color: #111;
}

.c-brush {
    width: 209px;
    margin-left: 14px;
}

.l-opacity {
    margin-left: 15px;
    width: 79px;
    margin-right: 13px;
    font-size: 18.5px;
}

.c-opacity {
    width: 139px;
}

.l-style {
    margin-left: 10px;
    width: 70px;
    font-size: 18.5px;
}

.c-style {
    width: 76px;
}

.ctl-sep {
    width: 1px;
    height: 60px;
    background-color: #444;
}

.s1 {
    margin-left: 12px;
}

.ctl-btn {
    flex: none;
    height: 38px;
    border: 2px solid #6a6a6a;
    border-radius: 4px;
    color: #f0f0f0;
    font-size: 18.5px;
    line-height: 33px;
    text-align: center;
}

.b-format {
    width: 223px;
    margin-left: 12px;
}

.b-prefs {
    width: 141px;
    margin-left: 11px;
}

.align-icon {
    width: 37px;
    height: 33px;
    margin-left: 21px;
}

.chev.free {
    margin-left: 8px;
}

.s2 {
    margin-left: 18px;
}

.recolor-icon {
    width: 36px;
    height: 36px;
    margin-left: 30px;
}

.ctl-right {
    margin-left: auto;
    padding-right: 33px;
    display: flex;
    align-items: center;
}

.grid-snap {
    width: 28px;
    height: 36px;
}

.magnet {
    width: 28px;
    height: 30px;
    margin-left: 24px;
}

.ctl-right .chev.free {
    margin-left: 26px;
}

.list-icon {
    width: 24px;
    height: 24px;
    margin-left: 36px;
}

/* Workspace */
.workspace {
    flex: 1;
    display: flex;
    min-height: 0;
}

.left-col {
    flex: none;
    width: 83px;
    display: flex;
    flex-direction: column;
    background-color: #3a3a3a;
}

.collapse-row {
    height: 25px;
    padding-left: 12px;
    color: #9a9a9a;
    font-size: 20px;
    line-height: 20px;
    border-bottom: 2px solid #2f2f2f;
}

.toolbar {
    flex: 1;
    width: 75px;
    margin-left: 3px;
    display: flex;
    flex-direction: column;
    align-items: center;
    background-color: #4a4a4a;
}

.tool-grip {
    height: 39px;
    padding-top: 3px;
}

.tool {
    flex: none;
    position: relative;
    width: 56px;
    height: 48px;
    display: flex;
    align-items: center;
    justify-content: center;
    border-radius: 4px;
}

.tool svg {
    width: 36px;
    height: 36px;
}

/* little flyout corner */
.tool.more::after {
    content: "";
    position: absolute;
    right: -2px;
    bottom: 3px;
    border-style: solid;
    border-width: 0 0 7px 7px;
    border-color: transparent transparent #c4c4c4 transparent;
}

.tool.active {
    height: 44px;
    margin: 2px 0;
    background-color: #222;
}

.tool-sep {
    width: 60px;
    height: 1px;
    margin-top: 4px;
    background-color: #5a5a5a;
}

.default-row {
    width: 66px;
    margin-top: 8px;
    display: flex;
    justify-content: space-between;
    align-items: center;
}

.default-icon {
    width: 24px;
    height: 24px;
}

.swap-icon {
    width: 22px;
    height: 22px;
}

/* fill and stroke overlap */
.fill-stroke {
    position: relative;
    width: 66px;
    height: 60px;
    margin-top: 13px;
}

.big-fill {
    position: absolute;
    left: 3px;
    top: 0;
    width: 40px;
    height: 40px;
    border: 2px solid #2a2a2a;
    background: linear-gradient(to top right, #fff 44%, #d40000 44%, #d40000 54%, #fff 54%);
}

.big-stroke {
    position: absolute;
    left: 25px;
    top: 21px;
    width: 39px;
    height: 39px;
    background-color: #111;
    border: 2px solid #fff;
}

.big-stroke::after {
    content: "";
    position: absolute;
    left: 7px;
    top: 7px;
    width: 21px;
    height: 21px;
    background-color: #4a4a4a;
    border: 3px solid #fff;
}

.modes {
    width: 56px;
    height: 20px;
    margin-top: 12px;
    display: flex;
    border: 2px solid #222;
    background-color: #222;
    gap: 2px;
}

.modes span {
    flex: 1;
}

.mode-solid {
    background-color: #fff;
}

.mode-grad {
    background: linear-gradient(90deg, #fff, #111);
}

.mode-none {
    background: linear-gradient(to top right, #fff 40%, #d40000 40%, #d40000 60%, #fff 60%);
}

.tool-small {
    display: flex;
    justify-content: center;
}

.draw-mode {
    margin-top: 18px;
}

.draw-mode svg {
    width: 21px;
    height: 20px;
}

.screen-mode {
    margin-top: 27px;
}

.screen-mode svg {
    width: 37px;
    height: 24px;
}

.tool-dots {
    display: flex;
    gap: 4px;
    margin-top: 50px;
}

.tool-dots i,
.more-dots i {
    width: 7px;
    height: 7px;
    border-radius: 50%;
    background-color: #bdbdbd;
}

/* Document */
.doc-col {
    flex: none;
    width: 3169px;
    display: flex;
    flex-direction: column;
}

.doc-tabs {
    flex: none;
    height: 59px;
    background-color: #383838;
    border-bottom: 2px solid #2f2f2f;
}

.doc-tab {
    width: 523px;
    height: 57px;
    display: flex;
    align-items: center;
    padding-left: 20px;
    background-color: #4b4b4b;
    color: #e8e8e8;
    font-size: 21.8px;
    font-weight: 600;
}

.doc-tab em {
    margin-left: auto;
    margin-right: 13px;
    font-weight: 400;
    font-size: 24px;
    color: #c4c4c4;
}

.doc-body {
    flex: 1;
    display: flex;
    min-height: 0;
}

.canvas-col {
    flex: 1;
    display: flex;
    flex-direction: column;
    min-width: 0;
}

.pasteboard {
    flex: none;
    height: 50px;
    background-color: #595959;
    border-bottom: 3px solid #000;
}

.artboard {
    flex: 1;
    position: relative;
    background-color: #fff;
    min-height: 0;
}

.art {
    position: absolute;
    left: 0;
    top: 0;
    width: 100%;
    height: 100%;
    overflow: visible;
}

.dim-text {
    font-family: 'Open Sans', sans-serif;
    font-size: 56px;
    text-anchor: middle;
    fill: #111;
}

/* these sit over the artwork, which runs on below them */
.hintbar {
    position: relative;
    flex: none;
    height: 50px;
    display: flex;
    align-items: center;
    padding-left: 11px;
    background-color: #4b4b4b;
    color: #b8b8b8;
    font-size: 19.4px;
}

.hintbar p {
    margin: 0 0 0 22px;
}

.hintbar b {
    font-weight: 700;
}

.hintbar u {
    text-decoration: none;
    padding: 0 5px;
}

.hint-q {
    width: 28px;
    height: 28px;
    border-radius: 50%;
    background-color: #bdbdbd;
    color: #4b4b4b;
    font-weight: 700;
    font-size: 20px;
    line-height: 28px;
    text-align: center;
}

.statusbar {
    position: relative;
    flex: none;
    height: 35px;
    display: flex;
    align-items: center;
    padding-left: 9px;
    background-color: #4b4b4b;
    border-bottom: 3px solid #2c2c2c;
    color: #dcdcdc;
    font-size: 18px;
}

.st-box {
    flex: none;
    height: 32px;
    display: flex;
    align-items: center;
    justify-content: space-between;
    padding: 2px 12px 0 4px;
    background-color: #3c3c3c;
    border-top: 2px solid #5a5a5a;
}

.st-zoom {
    width: 136px;
}

.st-rot {
    width: 137px;
    margin-left: 9px;
}

.st-page {
    width: 117px;
    margin-left: 16px;
}

.st-nav {
    width: 50px;
    height: 20px;
    margin-left: 14px;
}

.st-nav.next {
    margin-left: 20px;
}

.st-sep {
    width: 1px;
    height: 32px;
    margin-left: 11px;
    background-color: #444;
}

.st-label {
    margin-left: 160px;
    width: 258px;
    padding-top: 2px;
    color: #b8b8b8;
    font-size: 19px;
}

.st-arrow {
    width: 10px;
    height: 20px;
}

.h-scroll {
    flex: 1;
    height: 32px;
    margin-left: 7px;
    padding: 0 14px 0 16px;
    display: flex;
    align-items: center;
    background-color: #434343;
}

.h-thumb {
    width: 50px;
    height: 24px;
    margin-left: auto;
    margin-right: 1005px;
    border-radius: 12px;
    background-color: #5c5c5c;
}

.v-scroll {
    flex: none;
    width: 32px;
    display: flex;
    flex-direction: column;
    align-items: center;
    padding: 14px 0 46px;
    background-color: #424242;
}

.v-scroll .chev {
    width: 14px;
    height: 14px;
}

.v-thumb {
    width: 26px;
    height: 50px;
    margin-top: 890px;
    margin-bottom: auto;
    border-radius: 13px;
    background-color: #5c5c5c;
}

/* Right side */
.right-col {
    flex: 1;
    margin-left: 5px;
    display: flex;
    flex-direction: column;
    min-width: 0;
}

.right-head {
    flex: none;
    height: 25px;
    display: flex;
    justify-content: space-between;
    padding: 0 16px 0 55px;
    color: #9a9a9a;
    font-size: 20px;
    line-height: 20px;
    background-color: #3a3a3a;
    border-bottom: 2px solid #2f2f2f;
}

.right-body {
    flex: 1;
    display: flex;
    min-height: 0;
}

.dock {
    flex: none;
    width: 75px;
}

.dock-group {
    display: flex;
    flex-direction: column;
    align-items: center;
    padding-bottom: 4px;
    padding-left: 3px;
    background-color: #4a4a4a;
    border-bottom: 3px solid #2f2f2f;
}

.dock-group .grip {
    margin-top: 6px;
    height: 9px;
    margin-bottom: 5px;
}

.dock-group.first .grip {
    margin-top: 5px;
    margin-bottom: 3px;
}

.dock-slot {
    width: 100%;
    height: 56px;
    display: flex;
    align-items: center;
    justify-content: center;
}

.dock-slot.tight {
    height: 55px;
}

.dock-slot svg {
    width: 36px;
    height: 36px;
}

.props {
    flex: 1;
    margin-left: 6px;
    background-color: #4a4a4a;
    min-width: 0;
}

.prop-tabs {
    height: 56px;
    display: flex;
    background-color: #383838;
    border-bottom: 2px solid #2f2f2f;
}

.prop-tab {
    width: 165px;
    padding-left: 22px;
    color: #9c9c9c;
    font-size: 18px;
    font-weight: 700;
    line-height: 52px;
    border-right: 2px solid #2f2f2f;
}

.prop-tab.on {
    width: 132px;
    margin-bottom: -2px;
    padding-left: 20px;
    color: #f0f0f0;
    background-color: #4a4a4a;
    border-right: 2px solid #2f2f2f;
}

.prop-head {
    height: 62px;
    display: flex;
    align-items: center;
    justify-content: space-between;
    margin-right: 26px;
    padding-left: 20px;
    padding-top: 1px;
    font-size: 19px;
    border-bottom: 2px solid #555;
}

.panel-btn {
    width: 206px;
    height: 39px;
    border: 2px solid #6a6a6a;
    border-radius: 4px;
    color: #f0f0f0;
    font-size: 18.5px;
    line-height: 34px;
    text-align: center;
}

.panel-btn.full {
    width: 454px;
    height: 42px;
    line-height: 37px;
    margin-top: 22px;
}

.prop-section {
    margin-right: 26px;
    padding-left: 20px;
    border-bottom: 2px solid #555;
}

.prop-section h4 {
    margin: 0;
    padding-top: 38px;
    color: #c0c0c0;
    font-size: 18px;
    font-weight: 400;
    line-height: 24px;
}

.transform {
    height: 261px;
}

.tf-grid {
    display: grid;
    grid-template-columns: 60px 36px 113px 31px 37px 113px 58px;
    grid-auto-rows: 42px;
    row-gap: 10px;
    margin-top: 14px;
    align-items: center;
}

.ref-point {
    grid-row: 1 / 3;
    width: 38px;
    height: 40px;
}

.tf-grid label {
    color: #b4b4b4;
    font-size: 20px;
}

.tf-grid label.second {
    grid-column: 5;
}

.tf-field {
    display: flex;
    align-items: center;
    height: 42px;
    padding-left: 9px;
    background-color: #515151;
    border-radius: 3px;
    color: #777;
    font-size: 20px;
}

.link-off {
    grid-column: 7;
    grid-row: 1 / 3;
    justify-self: end;
    width: 30px;
    height: 36px;
}

.tf-angle {
    display: flex;
    align-items: center;
    margin-top: 10px;
    padding-left: 51px;
}

.angle-icon {
    width: 24px;
    height: 20px;
}

.colon {
    width: 9px;
    color: #b4b4b4;
    text-align: right;
}

.tf-field.angle {
    width: 113px;
    justify-content: space-between;
    padding-left: 7px;
    padding-right: 17px;
}

.flip-h {
    width: 27px;
    height: 24px;
    margin-left: 85px;
}

.flip-v {
    width: 22px;
    height: 26px;
    margin-left: 24px;
}

.more-dots {
    display: flex;
    justify-content: flex-end;
    gap: 3px;
    margin-top: 17px;
    padding-right: 14px;
}

.aspect {
    height: 355px;
}

.asp-row {
    position: relative;
    height: 42px;
    display: flex;
    align-items: center;
    margin-top: 17px;
}

.prop-section h4 + .asp-row {
    margin-top: 22px;
}

.s36 {
    width: 36px;
    height: 36px;
    border: 2px solid #2a2a2a;
}

.s36.sw-stroke {
    border: 2px solid #fff;
    outline: 2px solid #111;
    outline-offset: -1px;
}

.s36.sw-stroke::after {
    width: 18px;
    height: 18px;
}

.asp-label {
    margin-left: 25px;
    color: #bdbdbd;
    font-size: 18.5px;
}

.asp-label.dotted {
    color: #e4e4e4;
}

.checker {
    width: 32px;
    height: 32px;
    margin-left: 2px;
    margin-right: 2px;
    border: 2px solid #b0b0b0;
    background: conic-gradient(#727272 25%, #4f4f4f 0 50%, #727272 0 75%, #4f4f4f 0) 0 0 / 14px 14px;
}

.c-spin2 {
    position: absolute;
    left: 162px;
    top: 0;
    width: 139px;
}

.c-spin2 .spin {
    width: 36px;
}

.c-spin2 .val {
    width: 65px;
}

.c-opa2 {
    position: absolute;
    left: 162px;
    top: 0;
    width: 139px;
}

.c-opa2 .val {
    width: 101px;
}

.fx-row {
    display: flex;
    align-items: flex-end;
    margin-top: 30px;
    margin-left: -6px;
    height: 34px;
}

.fx-row em {
    font-family: 'Liberation Serif', serif;
    font-style: italic;
    font-size: 30px;
    line-height: 30px;
    color: #c4c4c4;
}

.fx-row small {
    margin-left: 2px;
    margin-bottom: 4px;
    border-style: solid;
    border-width: 4px 3px 0 3px;
    border-color: #c4c4c4 transparent transparent transparent;
}

.aspect .more-dots {
    margin-top: 9px;
    padding-right: 24px;
}

.quick {
    border-bottom: none;
}

.quick h4 {
    padding-top: 48px;
}

/* Floating dimension widget */
.dim-widget {
    position: absolute;
    left: 184px;
    top: 656px;
    width: 299px;
    height: 74px;
    display: flex;
    align-items: center;
    padding-left: 9px;
    background-color: #4b4b4b;
    border: 2px solid #3a3a3a;
    border-radius: 5px;
}

.w-grip {
    width: 4px;
    height: 54px;
    margin-right: 32px;
    background-color: #bdbdbd;
}

.w-item {
    width: 49px;
    height: 49px;
    margin-right: 15px;
    display: flex;
    align-items: center;
    justify-content: center;
    border-radius: 4px;
}

.w-item svg {
    width: 34px;
    height: 30px;
}

.w-item.on {
    background-color: #2e2e2e;
}

/* Layers panel */
.layers-panel {
    position: absolute;
    left: 2437px;
    top: 221px;
    width: 781px;
    height: 1169px;
    display: flex;
    flex-direction: column;
    background-color: #4a4a4a;
    border-radius: 8px 8px 0 0;
    box-shadow: 0 0 3px #222;
}

.lp-title {
    flex: none;
    height: 27px;
    display: flex;
    justify-content: flex-end;
    align-items: center;
    gap: 18px;
    padding-right: 13px;
    color: #bdbdbd;
    font-size: 20px;
    background-color: #3a3a3a;
    border-radius: 8px 8px 0 0;
    border-bottom: 2px solid #2f2f2f;
}

.lp-title em {
    font-size: 24px;
}

.lp-tabs {
    flex: none;
    height: 54px;
    display: flex;
    align-items: center;
    background-color: #3a3a3a;
    border-bottom: 2px solid #2f2f2f;
}

.lp-tab {
    width: 109px;
    height: 54px;
    padding-left: 20px;
    background-color: #4a4a4a;
    color: #f0f0f0;
    font-size: 18px;
    font-weight: 700;
    line-height: 52px;
    border-right: 2px solid #2f2f2f;
}

.lp-menu {
    width: 21px;
    height: 16px;
    margin-left: auto;
    margin-right: 13px;
}

.lp-frame {
    flex: 1;
    margin: 14px 12px 0;
    border: 2px solid #555;
    border-radius: 4px 4px 0 0;
}

.lp-search-row {
    display: flex;
    align-items: center;
    height: 70px;
    padding-left: 10px;
    padding-bottom: 10px;
    border-bottom: 2px solid #5a5a5a;
}

.lp-search {
    width: 686px;
    height: 46px;
    display: flex;
    align-items: center;
    padding-left: 12px;
    background-color: #3b3b3b;
    border: 2px solid #555;
    border-radius: 3px;
    color: #666;
    font-size: 19px;
}

.lp-search svg {
    width: 22px;
    height: 24px;
    margin-right: 21px;
}

.lp-filter {
    width: 27px;
    height: 29px;
    margin-left: 21px;
}

.layer-row {
    position: relative;
    height: 42px;
    display: flex;
    align-items: center;
    border-bottom: 2px solid #5a5a5a;
    color: #e4e4e4;
    font-size: 18px;
}

.layer-row.selected {
    background-color: #4a6380;
    border-bottom-color: #4a6380;
}

.l-eye {
    flex: none;
    width: 42px;
    height: 100%;
    display: flex;
    align-items: center;
    padding-left: 7px;
    border-right: 1px solid #5a5a5a;
}

.l-eye svg {
    width: 24px;
    height: 15px;
}

.l-color {
    flex: none;
    width: 6px;
    height: 35px;
    margin-left: 43px;
}

.l-color.red {
    background-color: #f04a4a;
}

.l-color.green {
    background-color: #3fe04f;
}

.l-chev {
    margin-left: 14px;
    border-color: #f0f0f0;
    width: 11px;
    height: 11px;
}

.l-thumb {
    flex: none;
    width: 36px;
    height: 36px;
    margin-left: 28px;
    background-color: #fff;
    border: 2px solid #111;
}

.l-thumb svg {
    width: 32px;
    height: 32px;
}

.l-name {
    margin-left: 10px;
}

.l-target {
    position: absolute;
    left: 695px;
    top: 12px;
    width: 16px;
    height: 16px;
    border: 2px solid #cfcfcf;
    border-radius: 50%;
}

.layer-row::after {
    content: "";
    position: absolute;
    left: 681px;
    top: 0;
    bottom: 0;
    width: 1px;
    background-color: #5a5a5a;
}

.l-corner {
    position: absolute;
    right: 0;
    top: 0;
    border-style: solid;
    border-width: 0 12px 12px 0;
    border-color: transparent #e0e0e0 transparent transparent;
}

.lp-foot {
    flex: none;
    height: 40px;
    display: flex;
    align-items: center;
    padding-left: 11px;
    color: #c4c4c4;
    font-size: 18px;
}

.lp-foot-icons {
    display: flex;
    margin-left: auto;
    margin-right: 58px;
    align-items: center;
    gap: 25px;
}

.lp-foot-icons svg {
    height: 25px;
    width: 26px;
}

.lp-resize {
    flex: none;
    height: 17px;
    display: flex;
    justify-content: center;
    padding-top: 4px;
    border-top: 4px solid #2f2f2f;
}

/* Click highlight */
.click-fx {
    position: absolute;
    left: 2402px;
    top: 345px;
    width: 120px;
    height: 120px;
}
```
